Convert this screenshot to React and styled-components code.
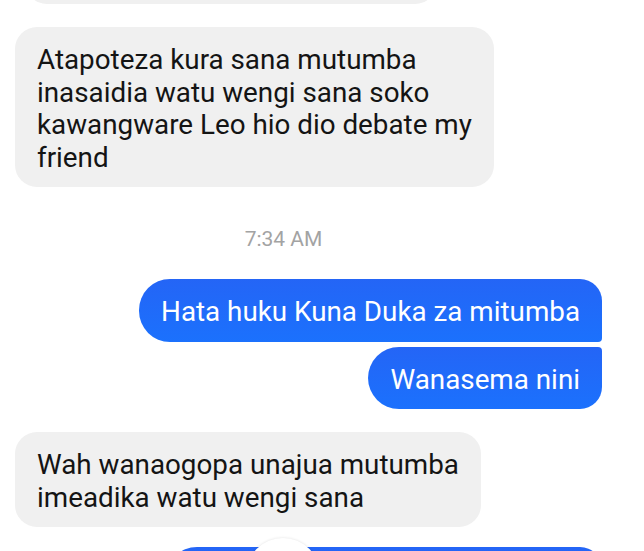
import React from 'react';
import styled, { createGlobalStyle } from 'styled-components';

const messages = [
    { id: 'prev', side: 'in', lines: [], stub: true },
    {
        id: 'm1',
        side: 'in',
        gap: 23,
        lines: [
            'Atapoteza kura sana mutumba',
            'inasaidia watu wengi sana soko',
            'kawangware Leo hio dio debate my',
            'friend'
        ]
    },
    { id: 't1', time: '7:34 AM' },
    { id: 'm2', side: 'out', gap: 27, group: 'first', lines: ['Hata huku Kuna Duka za mitumba'] },
    { id: 'm3', side: 'out', gap: 5, group: 'last', lines: ['Wanasema nini'] },
    {
        id: 'm4',
        side: 'in',
        gap: 23,
        lines: ['Wah wanaogopa unajua mutumba', 'imeadika watu wengi sana']
    },
    { id: 'm5', side: 'out', gap: 20, group: 'first', lines: [''], wide: true }
];

const App = () => {
    return (
        <>
            <GlobalStyle />
            <Viewport>
                <Thread>
                    {messages.map((msg) => {
                        if (msg.time) {
                            return <Timestamp key={msg.id}>{msg.time}</Timestamp>;
                        }
                        if (msg.stub) {
                            return (
                                <Row key={msg.id} side="in" gap={-56}>
                                    <StubBubble />
                                </Row>
                            );
                        }
                        return (
                            <Row key={msg.id} side={msg.side} gap={msg.gap}>
                                <Bubble side={msg.side} group={msg.group} wide={msg.wide}>
                                    {msg.lines.map((line, i) => (
                                        <Line key={i}>{line || '\u00a0'}</Line>
                                    ))}
                                </Bubble>
                            </Row>
                        );
                    })}
                </Thread>
                <ScrollButton />
            </Viewport>
        </>
    );
};

export default App;

// ---------------------------STYLES-------------------------------------------//

const GlobalStyle = createGlobalStyle`
    html, body {
        margin: 0;
        padding: 0;
        background: #ffffff;
    }
    body {
        font-family: Roboto, 'Liberation Sans', sans-serif;
    }
`;

const Viewport = styled.div`
    position: relative;
    width: 644px;
    height: 551px;
    overflow: hidden;
    background: #ffffff;
`;

const Thread = styled.div`
    display: flex;
    flex-direction: column;
    padding: 0 42px 0 15px;
`;

const Row = styled.div`
    display: flex;
    justify-content: ${(p) => (p.side === 'out' ? 'flex-end' : 'flex-start')};
    margin-top: ${(p) => p.gap || 0}px;
`;

const radius = (p) => {
    if (p.side !== 'out') return '22px';
    if (p.group === 'first') return '31px 22px 4px 31px';
    if (p.group === 'last') return '31px 4px 22px 31px';
    return '31px';
};

const Bubble = styled.div`
    box-sizing: border-box;
    width: ${(p) => (p.wide ? '436px' : 'auto')};
    padding: 17px 22px 13px;
    border-radius: ${radius};
    background: ${(p) =>
        p.side === 'out' ? 'linear-gradient(180deg, #2465f6 0%, #1b71fd 100%)' : '#f0f0f0'};
    color: ${(p) => (p.side === 'out' ? '#ffffff' : '#141414')};
    font-size: 27.8px;
    line-height: 32.5px;
`;

const StubBubble = styled.div`
    width: 412px;
    height: 60px;
    margin-left: 10px;
    border-radius: 22px;
    background: #f0f0f0;
`;

const Line = styled.div`
    white-space: nowrap;
`;

const Timestamp = styled.div`
    margin-top: 40px;
    padding-right: 50px;
    text-align: center;
    font-size: 21px;
    line-height: 25px;
    color: #a3a3a3;
`;

const ScrollButton = styled.div`
    position: absolute;
    left: 246px;
    top: 538px;
    width: 74px;
    height: 74px;
    border-radius: 50%;
    background: #ffffff;
    box-shadow: 0 0 3px rgba(0, 0, 0, 0.12);
`;
